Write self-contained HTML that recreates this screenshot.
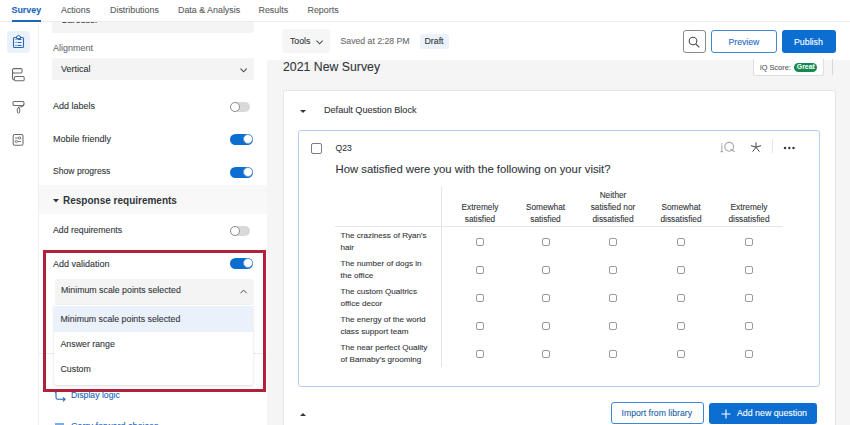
<!DOCTYPE html>
<html><head><meta charset="utf-8">
<style>
*{box-sizing:border-box;margin:0;padding:0}
html,body{width:850px;height:425px;overflow:hidden;background:#fff;font-family:"Liberation Sans",sans-serif;color:#32363a;position:relative}
.a{position:absolute}
.t{position:absolute;white-space:nowrap;line-height:1}
span,.hd,.rt{-webkit-text-stroke:0.1px currentColor}
/* top nav */
#nav{left:0;top:0;width:850px;height:22px;background:#fff;border-bottom:1px solid #ececec;z-index:5}
#nav .t{top:6px;font-size:8.9px;color:#5b5e62}
#nav .act{color:#1d66b8;font-weight:bold;font-size:8.9px}
#nav .ul{position:absolute;left:12px;top:20px;width:29px;height:2px;background:#1d66b8}
/* rail */
#rail{left:0;top:22px;width:39px;height:403px;background:#fff;border-right:1px solid #f0f0f0}
/* panel */
#panel{left:39px;top:22px;width:228px;height:403px;background:#fff;overflow:hidden}
.lbl{position:absolute;font-size:9px;color:#32363a;white-space:nowrap;line-height:1}
.tog{position:absolute;width:23px;height:10.5px;border-radius:6px;background:#0b6ed0}
.tog::after{content:"";position:absolute;right:0;top:0.25px;width:10px;height:10px;border-radius:50%;background:#fff;border:1px solid #6b9bd6;box-sizing:border-box}
.tog.off{background:#d9d9d9;width:20px;height:10px}
.tog.off::after{left:0;right:auto;top:0;width:10px;height:10px;border:1px solid #8f8f8f;box-sizing:border-box}
.sel{position:absolute;background:#f4f4f4;border-radius:2px}
/* main */
#main{left:267px;top:22px;width:583px;height:403px;background:#f5f5f5}
#toolbar{left:267px;top:22px;width:583px;height:37.5px;background:#fff}
.btn{position:absolute;border-radius:3px;font-size:9px;line-height:1}
.cb{position:absolute;width:8px;height:8px;border:1px solid #999;border-radius:2px;background:#fff}
.hd{position:absolute;font-size:8.3px;line-height:12px;text-align:center;color:#32363a;width:60px;white-space:nowrap}
.rt{position:absolute;left:340.5px;font-size:8.1px;line-height:12px;color:#32363a;white-space:nowrap}
</style></head><body>
<div id="nav" class="a">
  <span class="t act" style="left:11.5px">Survey</span>
  <span class="t" style="left:61px">Actions</span>
  <span class="t" style="left:110px">Distributions</span>
  <span class="t" style="left:178px">Data &amp; Analysis</span>
  <span class="t" style="left:258.5px">Results</span>
  <span class="t" style="left:307.5px">Reports</span>
  <div class="ul"></div>
</div>

<div id="rail" class="a">
  <div class="a" style="left:7px;top:9px;width:23px;height:22px;background:#e9f1fb;border-radius:4px"></div>
  <!-- clipboard icon -->
  <svg class="a" style="left:12px;top:12px" width="13" height="16" viewBox="0 0 13 16">
    <rect x="1.5" y="3.5" width="10" height="10" rx="1" fill="none" stroke="#2a68b5" stroke-width="1.1"/>
    <path d="M4.5 4.5 V2.5 H5.4 A1.1 1.1 0 0 1 7.6 2.5 H8.5 V4.5 Z" fill="#e9f1fb" stroke="#2a68b5" stroke-width="1"/>
    <path d="M3.5 5.5h1M5.5 5.5h4M3.5 8.5h1M5.5 8.5h4M3.5 11.5h1M5.5 11.5h4" stroke="#2a68b5" stroke-width="1"/>
  </svg>
  <!-- flow icon -->
  <svg class="a" style="left:11px;top:45px" width="15" height="15" viewBox="0 0 15 15">
    <rect x="1.5" y="1.6" width="9.6" height="4.4" rx="1.4" fill="none" stroke="#6b6b6b" stroke-width="1.05"/>
    <rect x="3.3" y="9.4" width="9.9" height="4.4" rx="1.4" fill="none" stroke="#6b6b6b" stroke-width="1.05"/>
    <path d="M1.5 4.5v6.8 q0 1.4 1.8 1.6" fill="none" stroke="#6b6b6b" stroke-width="1.05"/>
  </svg>
  <!-- roller icon -->
  <svg class="a" style="left:12px;top:78px" width="13" height="14" viewBox="0 0 13 14">
    <rect x="1" y="1.5" width="11" height="4" rx="1.3" fill="none" stroke="#6b6b6b" stroke-width="1.05"/>
    <path d="M11.8 4 Q11.8 7 8.5 7 H6.5 V8" fill="none" stroke="#6b6b6b" stroke-width="1"/>
    <rect x="5.3" y="8" width="2.4" height="5" rx="1" fill="none" stroke="#6b6b6b" stroke-width="1"/>
  </svg>
  <!-- settings icon -->
  <svg class="a" style="left:12px;top:111px" width="12" height="14" viewBox="0 0 12 14">
    <rect x="1.2" y="1.5" width="9.8" height="10.8" rx="1.6" fill="none" stroke="#6b6b6b" stroke-width="1.05"/>
    <path d="M3 5h6M3 8.5h6" stroke="#6b6b6b" stroke-width="0.9"/>
    <circle cx="7.6" cy="5" r="1.15" fill="#fff" stroke="#6b6b6b" stroke-width="0.9"/>
    <circle cx="4.4" cy="8.5" r="1.15" fill="#fff" stroke="#6b6b6b" stroke-width="0.9"/>
  </svg>
</div>

<div id="panel" class="a">
  <!-- panel coords: page y - 22, page x - 39 -->
  <div class="sel" style="left:13px;top:-14px;width:202px;height:25px">
    <span class="t" style="left:9px;top:7.5px;font-size:9px;color:#32363a">Carousel</span>
  </div>
  <span class="lbl" style="left:14px;top:21.5px;color:#6a6d70">Alignment</span>
  <div class="sel" style="left:13px;top:36px;width:202px;height:22px">
    <span class="t" style="left:9px;top:6.5px;font-size:9px">Vertical</span>
    <svg class="a" style="left:188px;top:9.5px" width="8" height="5" viewBox="0 0 8 5"><path d="M0.5 0.7 L3.6 3.8 L6.7 0.7" fill="none" stroke="#4a4a4a" stroke-width="1.1"/></svg>
  </div>
  <span class="lbl" style="left:14px;top:79.5px">Add labels</span>
  <div class="tog off" style="left:191px;top:80px"></div>
  <span class="lbl" style="left:14px;top:113px">Mobile friendly</span>
  <div class="tog" style="left:191px;top:112px"></div>
  <span class="lbl" style="left:14px;top:145px;font-size:8.6px">Show progress</span>
  <div class="tog" style="left:191px;top:145px"></div>
  <!-- response requirements header -->
  <div class="a" style="left:0;top:163px;width:228px;height:29px;background:#f8f8f8"></div>
  <svg class="a" style="left:14px;top:177px" width="6" height="4" viewBox="0 0 6 4"><path d="M0 0H6L3 3.5Z" fill="#32363a"/></svg>
  <span class="lbl" style="left:24px;top:174px;font-size:10px;font-weight:bold;-webkit-text-stroke:0">Response requirements</span>
  <span class="lbl" style="left:14px;top:204.3px;font-size:8.75px">Add requirements</span>
  <div class="tog off" style="left:191px;top:204px"></div>
  <span class="lbl" style="left:14px;top:237.5px">Add validation</span>
  <div class="tog" style="left:191px;top:236px"></div>
  <div class="sel" style="left:15.5px;top:257px;width:199px;height:26px">
    <span class="t" style="left:6.5px;top:7px;font-size:8.8px">Minimum scale points selected</span>
    <svg class="a" style="left:185px;top:10px" width="8" height="5" viewBox="0 0 8 5"><path d="M0.5 4.2 L3.6 1.1 L6.7 4.2" fill="none" stroke="#4a4a4a" stroke-width="1"/></svg>
  </div>
  <div class="a" style="left:0;top:331px;width:228px;height:1px;background:#ececec"></div>
  <div class="a" style="left:15px;top:283px;width:199px;height:80px;background:#fff;box-shadow:0 1px 3px rgba(0,0,0,0.15);border-radius:0 0 3px 3px">
    <div class="a" style="left:0;top:1px;width:199px;height:26px;background:#ebf1fa"></div>
    <span class="t" style="left:6.5px;top:10px;font-size:8.8px">Minimum scale points selected</span>
    <span class="t" style="left:6.5px;top:34.5px;font-size:8.8px">Answer range</span>
    <span class="t" style="left:6.5px;top:59.5px;font-size:8.8px">Custom</span>
  </div>
  <!-- red box -->
  <div class="a" style="left:4px;top:228px;width:223px;height:142px;border:3px solid #b1213a"></div>
  <!-- display logic -->
  <svg class="a" style="left:14.5px;top:369px" width="13" height="11" viewBox="0 0 13 11">
    <path d="M0.8 1.2 H2 V6.5 Q2 8.3 3.8 8.3 H11 M9 6.3 L11 8.3 L9 10.3" fill="none" stroke="#1d66b8" stroke-width="1.1"/>
  </svg>
  <span class="lbl" style="left:32px;top:369px;color:#1d66b8;font-size:8.7px">Display logic</span>
  <svg class="a" style="left:14.5px;top:397.5px" width="12" height="8" viewBox="0 0 12 8"><path d="M1 4 H10" stroke="#0b6ed0" stroke-width="1.1"/></svg>
  <span class="lbl" style="left:32px;top:400px;color:#1d66b8">Carry forward choices</span>
</div>

<div id="main" class="a"></div>
<div id="toolbar" class="a">
  <!-- x offsets page -267, y -22 -->
  <div class="btn" style="left:15px;top:7px;width:48px;height:23.5px;background:#f6f6f6">
    <span class="t" style="left:8px;top:7.5px;font-size:8.7px">Tools</span>
    <svg class="a" style="left:33.5px;top:10.5px" width="8" height="5" viewBox="0 0 8 5"><path d="M0.5 0.7 L3.6 3.8 L6.7 0.7" fill="none" stroke="#4a4a4a" stroke-width="1.05"/></svg>
  </div>
  <span class="t" style="left:73.5px;top:14.5px;font-size:8.7px;color:#6a6d70">Saved at 2:28 PM</span>
  <div class="btn" style="left:153px;top:12px;width:29px;height:14.5px;background:#ebf2fa">
    <span class="t" style="left:4.5px;top:3px;font-size:8.8px;color:#32363a">Draft</span>
  </div>
  <div class="btn" style="left:416px;top:8px;width:22.5px;height:22.5px;border:1px solid #8a8a8a">
    <svg class="a" style="left:4px;top:4.5px" width="13" height="13" viewBox="0 0 13 13"><circle cx="5" cy="5" r="3.8" fill="none" stroke="#4a4a4a" stroke-width="1.1"/><path d="M7.8 7.8 L11.3 11.3" stroke="#4a4a4a" stroke-width="1.2"/></svg>
  </div>
  <div class="btn" style="left:444px;top:8px;width:65.5px;height:22.5px;border:1px solid #3f87d6">
    <span class="t" style="left:16.5px;top:7px;font-size:8.7px;color:#1c6bc4">Preview</span>
  </div>
  <div class="btn" style="left:514.5px;top:8px;width:54px;height:22.5px;background:#0b6ed0">
    <span class="t" style="left:12.5px;top:7.5px;font-size:8.8px;color:#fff">Publish</span>
  </div>
</div>

<!-- main content (page coords) -->
<span class="t" style="left:283px;top:61px;font-size:12.3px;color:#32363a">2021 New Survey</span>
<div class="a" style="left:752.5px;top:59px;width:71px;height:16.5px;background:#fff;border:1px solid #dedede;border-top:none;border-radius:0 0 3px 3px">
  <span class="t" style="left:6.5px;top:5px;font-size:7.4px;color:#55585c">iQ Score:</span>
  <div class="a" style="left:40.5px;top:3.7px;width:23px;height:9.5px;border-radius:5px;background:#138a4f">
    <span class="t" style="left:2.8px;top:1.6px;font-size:6.9px;font-weight:bold;color:#fff;-webkit-text-stroke:0">Great</span>
  </div>
</div>
<div class="a" style="left:832px;top:59px;width:1px;height:16px;background:#d8d8d8"></div>

<!-- block card -->
<div class="a" style="left:282.5px;top:89.5px;width:553.5px;height:340px;background:#fff;border:1px solid #e4e4e4;border-radius:3px">
</div>
<svg class="a" style="left:300px;top:110px" width="6" height="3" viewBox="0 0 6 3"><path d="M0 0H6L3 3Z" fill="#32363a"/></svg>
<span class="t" style="left:324px;top:105.5px;font-size:9.1px;color:#32363a">Default Question Block</span>

<!-- question card -->
<div class="a" style="left:298px;top:130px;width:521.5px;height:256.5px;background:#fff;border:1px solid #b5cfee;border-radius:3px"></div>
<div class="a" style="left:311px;top:143px;width:11px;height:10.5px;border:1px solid #7d7d7d;border-radius:2px"></div>
<span class="t" style="left:335.5px;top:144px;font-size:8.6px">Q23</span>
<span class="t" style="left:335.5px;top:163.5px;font-size:11.3px">How satisfied were you with the following on your visit?</span>
<!-- icons top-right -->
<svg class="a" style="left:719px;top:140px" width="18" height="14" viewBox="0 0 18 14">
  <circle cx="2.8" cy="4" r="0.8" fill="#a8a8a8"/>
  <path d="M2.8 5.6 V11.5 M1.6 11.6 H4" stroke="#a8a8a8" stroke-width="1.1" fill="none"/>
  <circle cx="10.2" cy="6.8" r="4.4" fill="none" stroke="#a8a8a8" stroke-width="1.15"/>
  <path d="M11.5 9.2 L15.8 11.8" stroke="#a8a8a8" stroke-width="1.2"/>
</svg>
<svg class="a" style="left:750px;top:142px" width="12" height="11" viewBox="0 0 12 11">
  <path d="M6 0.4 V5.2 M6 5.2 L0.9 3.6 M6 5.2 L11.1 3.6 M6 5.2 L2.6 9.6 M6 5.2 L9.4 9.6" stroke="#444" stroke-width="1" fill="none"/>
</svg>
<div class="a" style="left:772px;top:138.5px;width:1px;height:14px;background:#e6e6e6"></div>
<svg class="a" style="left:783px;top:145.5px" width="13" height="4" viewBox="0 0 13 4"><circle cx="2" cy="2" r="1.25" fill="#3a3a3a"/><circle cx="6.3" cy="2" r="1.25" fill="#3a3a3a"/><circle cx="10.5" cy="2" r="1.25" fill="#3a3a3a"/></svg>

<!-- matrix -->
<div class="a" style="left:440.5px;top:186px;width:1px;height:181px;background:#e6e6e6"></div>
<div class="a" style="left:334.5px;top:225.5px;width:448px;height:1px;background:#e6e6e6"></div>
<div class="hd" style="left:450px;top:201px">Extremely<br>satisfied</div>
<div class="hd" style="left:515.5px;top:201px">Somewhat<br>satisfied</div>
<div class="hd" style="left:583px;top:189px">Neither<br>satisfied nor<br>dissatisfied</div>
<div class="hd" style="left:651px;top:201px">Somewhat<br>dissatisfied</div>
<div class="hd" style="left:719px;top:201px">Extremely<br>dissatisfied</div>

<div class="rt" style="top:230px">The craziness of Ryan's<br>hair</div>
<div class="rt" style="top:258px">The number of dogs in<br>the office</div>
<div class="rt" style="top:286px">The custom Qualtrics<br>office decor</div>
<div class="rt" style="top:314px">The energy of the world<br>class support team</div>
<div class="rt" style="top:342px">The near perfect Quality<br>of Barnaby's grooming</div>

<div class="cb" style="left:476px;top:238px"></div><div class="cb" style="left:541.5px;top:238px"></div><div class="cb" style="left:609px;top:238px"></div><div class="cb" style="left:677px;top:238px"></div><div class="cb" style="left:744.5px;top:238px"></div><div class="cb" style="left:476px;top:266px"></div><div class="cb" style="left:541.5px;top:266px"></div><div class="cb" style="left:609px;top:266px"></div><div class="cb" style="left:677px;top:266px"></div><div class="cb" style="left:744.5px;top:266px"></div><div class="cb" style="left:476px;top:294px"></div><div class="cb" style="left:541.5px;top:294px"></div><div class="cb" style="left:609px;top:294px"></div><div class="cb" style="left:677px;top:294px"></div><div class="cb" style="left:744.5px;top:294px"></div><div class="cb" style="left:476px;top:322px"></div><div class="cb" style="left:541.5px;top:322px"></div><div class="cb" style="left:609px;top:322px"></div><div class="cb" style="left:677px;top:322px"></div><div class="cb" style="left:744.5px;top:322px"></div><div class="cb" style="left:476px;top:350px"></div><div class="cb" style="left:541.5px;top:350px"></div><div class="cb" style="left:609px;top:350px"></div><div class="cb" style="left:677px;top:350px"></div><div class="cb" style="left:744.5px;top:350px"></div>

<!-- bottom -->
<svg class="a" style="left:300px;top:412.5px" width="6" height="3" viewBox="0 0 6 3"><path d="M0 3H6L3 0Z" fill="#32363a"/></svg>
<div class="btn" style="left:611px;top:402px;width:92.5px;height:22px;border:1px solid #3f87d6;background:#fff">
  <span class="t" style="left:9.5px;top:6px;font-size:8.7px;color:#1d5fa8">Import from library</span>
</div>
<div class="btn" style="left:709px;top:402.5px;width:108px;height:21.5px;background:#0b6ed0">
  <svg class="a" style="left:12px;top:6px" width="10" height="10" viewBox="0 0 10 10"><path d="M5 0.5V9.5M0.5 5H9.5" stroke="#fff" stroke-width="1.1"/></svg>
  <span class="t" style="left:28px;top:6px;font-size:8.8px;color:#fff">Add new question</span>
</div>
</body></html>
